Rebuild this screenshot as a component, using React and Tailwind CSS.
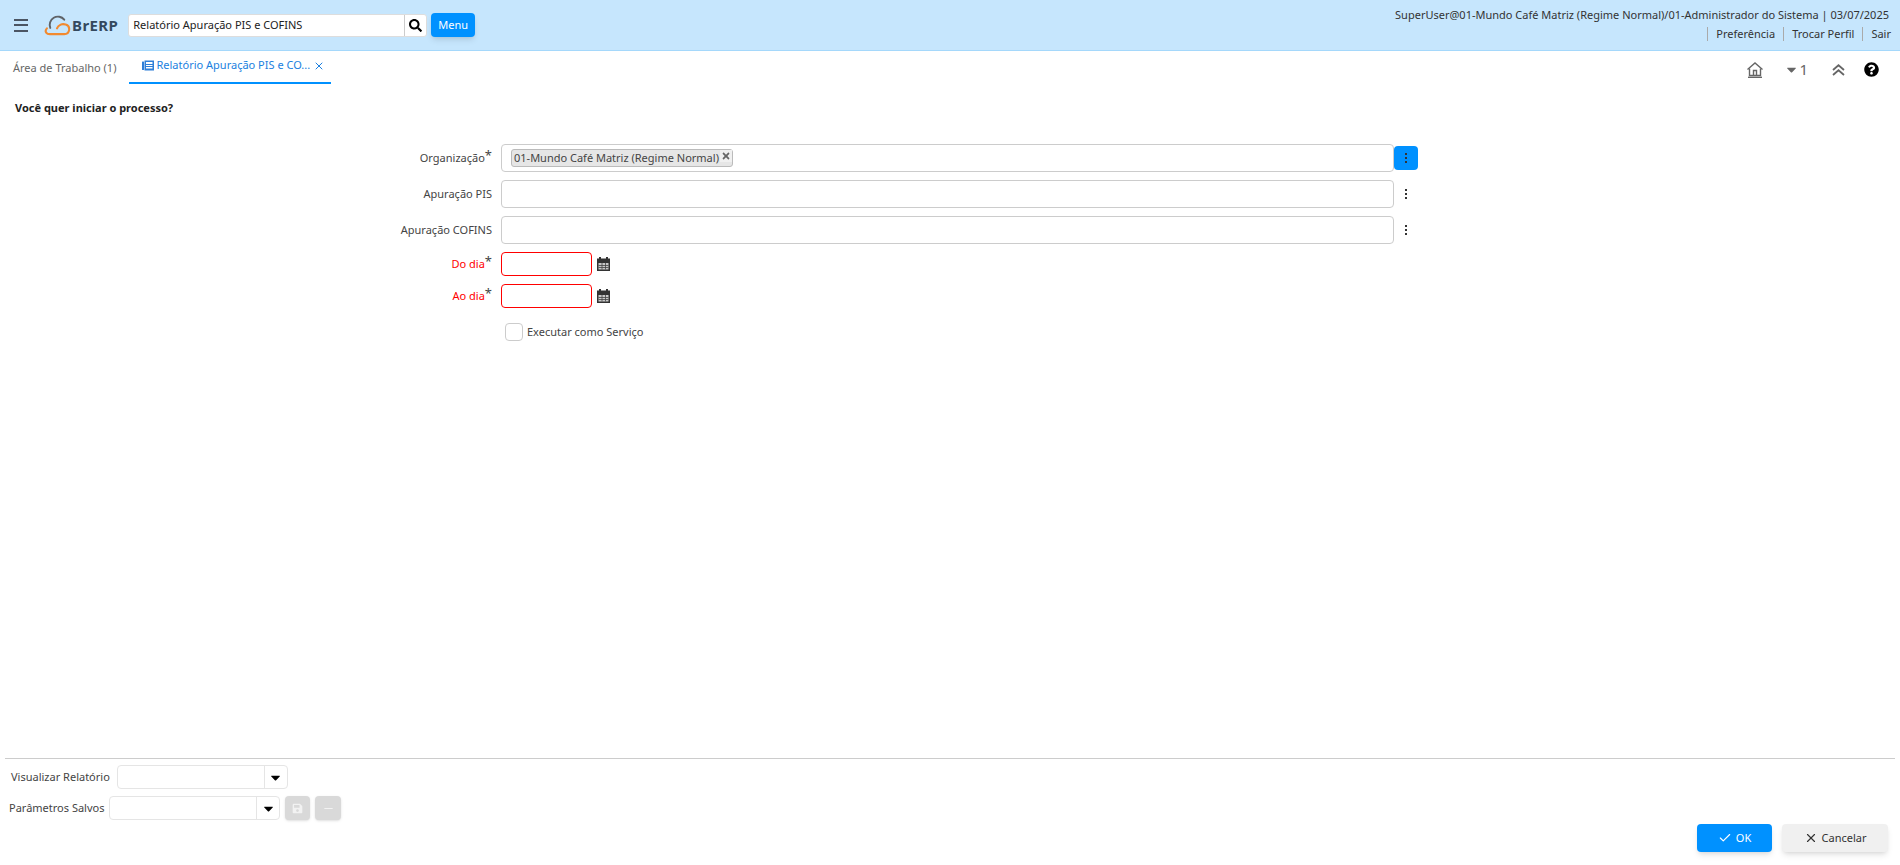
import React from 'react';
import { FaSearch, FaQuestionCircle, FaSave, FaCaretDown, FaTimes } from 'react-icons/fa';
import { FiX, FiCheck, FiMinus } from 'react-icons/fi';

const Logo = () => (
  <div className="flex items-center">
    <svg width="27" height="22" viewBox="0 0 28 22" fill="none" className="shrink-0">
      <path d="M6.5 14 A8.5 8.5 0 0 1 21 5.5" stroke="#5f6368" strokeWidth="2" strokeLinecap="round" />
      <path d="M3 14.5 C0 18 3 20.500 6 20.500 H21 C27 20.500 28 12 22.500 10.500 C19 9.500 15 10.500 13.500 14.500" stroke="#f28a30" strokeWidth="2.200" strokeLinecap="round" />
    </svg>
    <span className="ml-[1px] text-[15px] font-bold tracking-[0.4px] text-[#34495e]">BrERP</span>
  </div>
);

const Header = () => (
  <div className="flex h-[51px] shrink-0 items-center justify-between border-b border-[#a5d8fb] bg-[#c6e6fd] pl-[14px] pr-[5px]">
    <div className="flex items-center">
      <div className="flex w-[14px] flex-col gap-[3.500px]">
        <span className="h-[2px] bg-[#4b5563]" />
        <span className="h-[2px] bg-[#4b5563]" />
        <span className="h-[2px] bg-[#4b5563]" />
      </div>
      <div className="ml-[16px]"><Logo /></div>
      <div className="ml-[10px] flex h-[23px] w-[299px] items-center rounded-[3px] border border-[#dddddd] bg-white">
        <span className="flex-1 pl-[4px] text-[11px] text-[#222222]">Relatório Apuração PIS e COFINS</span>
        <span className="flex h-full w-[22px] items-center justify-center border-l border-[#cccccc]">
          <FaSearch className="text-[13px] text-black" />
        </span>
      </div>
      <button className="ml-[4px] h-[24px] w-[44px] rounded-[4px] bg-[#0091ff] text-[11px] text-white shadow-md">Menu</button>
    </div>
    <div className="mb-[2px] flex flex-col items-end text-[11px] text-[#333333]">
      <div className="mr-[6px] leading-[16px]">SuperUser@01-Mundo Café Matriz (Regime Normal)/01-Administrador do Sistema | 03/07/2025</div>
      <div className="mr-[4px] mt-[4px] flex items-center leading-[14px]">
        <span className="border-l border-[#aaaaaa] pl-[8px] pr-[8px]">Preferência</span>
        <span className="border-l border-[#aaaaaa] pl-[8px] pr-[8px]">Trocar Perfil</span>
        <span className="border-l border-[#aaaaaa] pl-[8px]">Sair</span>
      </div>
    </div>
  </div>
);

const TabIcon = () => (
  <svg width="12" height="11" viewBox="0 0 12 11" className="shrink-0" fill="#2f7fd8">
    <rect x="0" y="1.500" width="2" height="8.500" rx="0.500" />
    <path d="M2.500 0.500 H12 V10.500 H2.500 Z M4 2 V4 H10.500 V2 Z M4 5 V6 H10.500 V5 Z M4 7 V8.500 H10.500 V7 Z" fillRule="evenodd" />
  </svg>
);

const HomeIcon = () => (
  <svg width="16" height="16" viewBox="0 0 16 16" fill="none" stroke="#666666" strokeWidth="1.400">
    <path d="M0.500 7.500 L8 1 L15.500 7.500" />
    <path d="M2.500 6.500 V13.500 H13.500 V6.500" />
    <path d="M6.500 13.500 V8.500 H9.500 V13.500" />
    <path d="M1 15.300 H15" strokeWidth="1.400" />
  </svg>
);

const ChevronsIcon = () => (
  <svg width="13" height="12" viewBox="0 0 13 12" fill="none" stroke="#666666" strokeWidth="1.800">
    <path d="M1 6 L6.500 1.200 L12 6" />
    <path d="M1 11 L6.500 6.200 L12 11" />
  </svg>
);

const CalendarIcon = () => (
  <svg width="13" height="14" viewBox="0 0 13 14" className="ml-[5px] shrink-0">
    <path d="M0 1.500 H2 V0 H4 V1.500 H9 V0 H11 V1.500 H13 V14 H0 Z" fill="#333333" />
    <rect x="1.500" y="6" width="10" height="6.500" fill="#c8c8c8" />
    <path d="M1.500 8.500 H11.500 M1.500 10.500 H11.500 M5 6 V12.500 M8.500 6 V12.500" stroke="#444444" strokeWidth="0.800" />
  </svg>
);

const TabBar = () => (
  <div className="flex h-[33px] shrink-0 items-start justify-between pl-[13px] pr-[21px]">
    <div className="flex h-full items-start text-[11px]">
      <span className="mt-[9px] text-[#666666]">Área de Trabalho (1)</span>
      <div className="ml-[13px] flex h-full w-[202px] items-center whitespace-nowrap border-b-2 border-[#0091ff] pb-[2px] pl-[13px] text-[#1a7fe0]">
        <TabIcon />
        <span className="ml-[2px]">Relatório Apuração PIS e CO...</span>
        <FiX className="ml-[3px] text-[12px]" />
      </div>
    </div>
    <div className="flex items-center pt-[10px] text-[#666666]">
      <HomeIcon />
      <FaCaretDown className="ml-[21px] text-[15px]" />
      <span className="text-[15px] leading-[17px]">1</span>
      <span className="ml-[24px]"><ChevronsIcon /></span>
      <FaQuestionCircle className="ml-[19px] text-[15px] text-black" />
    </div>
  </div>
);

const Dots = () => (
  <span className="flex flex-col gap-[2px]">
    <span className="h-[2px] w-[2px] bg-[#333333]" />
    <span className="h-[2px] w-[2px] bg-[#333333]" />
    <span className="h-[2px] w-[2px] bg-[#333333]" />
  </span>
);

const Label = ({ children, required, error }) => (
  <div className={`w-[501px] shrink-0 pr-[9px] text-right text-[11px] ${error ? 'text-[#ff0000]' : 'text-[#444444]'}`}>
    {children}
    {required && <span className="align-[2px] text-[13px] leading-none text-[#444444]">*</span>}
  </div>
);

const LookupRow = ({ label, required, active, children }) => (
  <div className="flex h-[28px] items-center">
    <Label required={required}>{label}</Label>
    <div className="flex h-full w-[893px] items-center rounded-[4px] border border-[#cccccc] pl-[9px]">{children}</div>
    <div className={`flex h-[24px] w-[24px] items-center justify-center rounded-[4px] ${active ? 'bg-[#0091ff]' : ''}`}>
      <Dots />
    </div>
  </div>
);

const DateRow = ({ label }) => (
  <div className="flex h-[24px] items-center">
    <Label required error>{label}</Label>
    <div className="h-full w-[91px] rounded-[4px] border border-[#ff0000]" />
    <CalendarIcon />
  </div>
);

const ProcessForm = () => (
  <div className="flex flex-col">
    <div className="flex flex-col gap-[8px]">
      <LookupRow label="Organização" required active>
        <span className="flex h-[18px] items-center rounded-[3px] border border-[#bbbbbb] bg-[#e6e6e6] pl-[2px] text-[11px] text-[#444444]">
          01-Mundo Café Matriz (Regime Normal)
          <span className="mb-[4px] ml-[1px] flex h-[12px] w-[12px] items-center justify-center bg-[#f0f0f0]">
            <FaTimes className="text-[10px] text-[#666666]" />
          </span>
        </span>
      </LookupRow>
      <LookupRow label="Apuração PIS" />
      <LookupRow label="Apuração COFINS" />
      <DateRow label="Do dia" />
      <DateRow label="Ao dia" />
    </div>
    <div className="ml-[505px] mt-[15px] flex items-center">
      <span className="h-[18px] w-[18px] rounded-[4px] border border-[#cccccc]" />
      <span className="ml-[4px] text-[11px] text-[#444444]">Executar como Serviço</span>
    </div>
  </div>
);

const Combo = ({ width }) => (
  <div className={`flex h-[24px] items-center rounded-[4px] border border-[#e5e5e5] ${width}`}>
    <span className="flex-1" />
    <span className="flex h-full w-[23px] items-center justify-center border-l border-[#e5e5e5]">
      <FaCaretDown className="text-[15px] text-black" />
    </span>
  </div>
);

const Footer = () => (
  <div className="mx-[5px] flex h-[107px] shrink-0 items-start justify-between border-t border-[#cccccc]">
    <div className="flex flex-col gap-[7px] pt-[6px] text-[11px] text-[#444444]">
      <div className="flex items-center pl-[6px]">
        <span>Visualizar Relatório</span>
        <div className="ml-[7px]"><Combo width="w-[171px]" /></div>
      </div>
      <div className="flex items-center pl-[4px]">
        <span>Parâmetros Salvos</span>
        <div className="ml-[5px]"><Combo width="w-[171px]" /></div>
        <button className="ml-[5px] flex h-[24px] w-[25px] items-center justify-center rounded-[4px] bg-[#d9d9d9] shadow-sm">
          <FaSave className="text-[11px] text-[#f2f2f2]" />
        </button>
        <button className="ml-[5px] flex h-[24px] w-[26px] items-center justify-center rounded-[4px] bg-[#d9d9d9] shadow-sm">
          <FiMinus className="text-[13px] text-[#f2f2f2]" />
        </button>
      </div>
    </div>
    <div className="mt-[65px] flex gap-[10px] pr-[7px] text-[11px]">
      <button className="flex h-[28px] w-[75px] items-center justify-center gap-[4px] rounded-[4px] bg-[#0091ff] text-white shadow-md">
        <FiCheck className="text-[14px]" />OK
      </button>
      <button className="flex h-[28px] w-[106px] items-center justify-center gap-[4px] rounded-[4px] bg-[#f0f0f0] text-[#333333] shadow-md">
        <FiX className="text-[14px]" />Cancelar
      </button>
    </div>
  </div>
);

export default function App() {
  return (
    <div className="flex h-[865px] w-[1900px] flex-col overflow-hidden bg-white font-['Noto_Sans',sans-serif]">
      <Header />
      <TabBar />
      <div className="flex-1">
        <div className="pl-[15px] pt-[15px] text-[11px] font-bold leading-[17px] text-[#222222]">Você quer iniciar o processo?</div>
        <div className="mt-[28px]"><ProcessForm /></div>
      </div>
      <Footer />
    </div>
  );
}
